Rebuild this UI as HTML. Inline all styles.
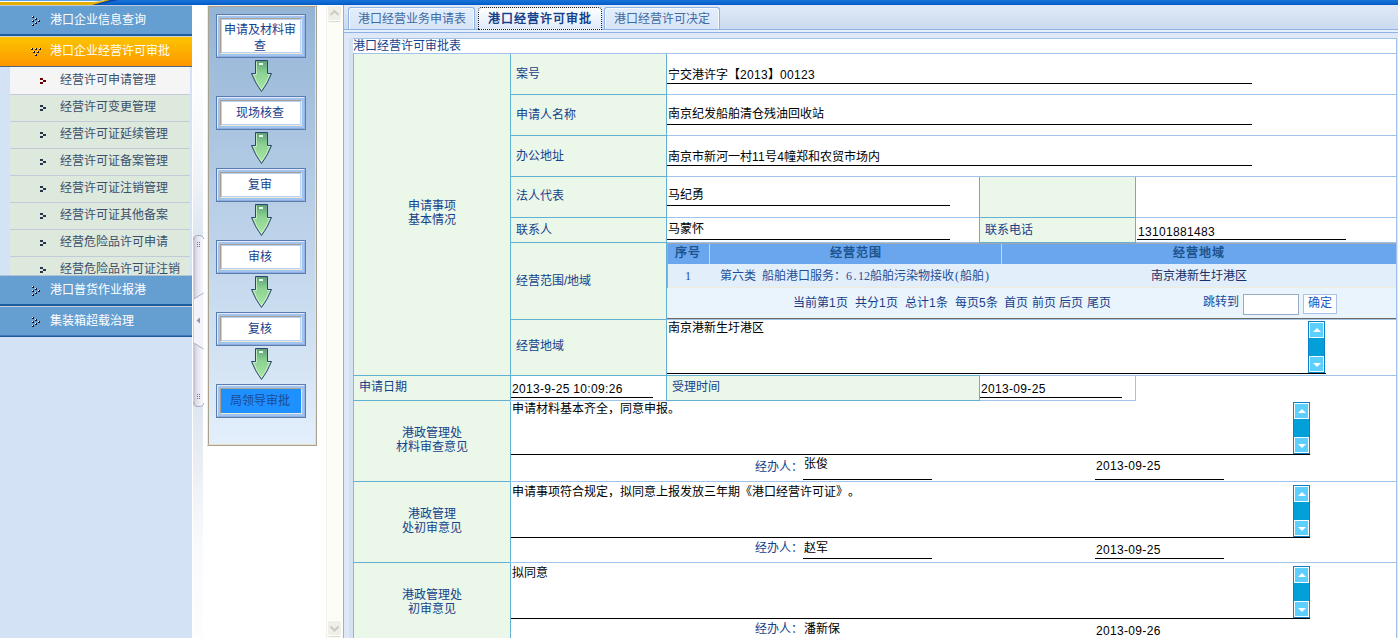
<!DOCTYPE html>
<html lang="zh-CN"><head><meta charset="utf-8"><title>港口经营许可审批</title><style>
*{box-sizing:border-box;margin:0;padding:0}
html,body{width:1398px;height:638px;overflow:hidden;background:#fff}
body{position:relative;font-family:"Liberation Sans",sans-serif;font-size:12px;line-height:14px;color:#000}
.a{position:absolute}
.t{position:absolute;white-space:nowrap;height:14px;line-height:14px;font-size:12px}
.w{color:#fff}
.bl{color:#15428b}
.g{position:absolute;background:#eaf7e9}
.lt{position:absolute;background:#62b0d2}
.lb{position:absolute;background:#a0c3ea}
.k{position:absolute;background:#000}
.c{text-align:center}
i{display:inline-block;width:12px;text-align:center;font-style:normal;letter-spacing:0}
.B{font-weight:bold}
.B i{width:13px;text-align:left}
.n{letter-spacing:.33px}
.h{display:inline-block;width:6px;text-align:center;font-family:"Liberation Serif",serif}
.hd{position:absolute;left:0;width:192px;height:30px;background:#659ed1}
.sub{position:absolute;left:10px;width:180px;height:27px;background:#dce9dc;border-bottom:1px solid #c3cbdb}
.sub .t{left:50px;top:5px;color:#3b4f6b}
.fb{position:absolute;left:216px;width:90px;height:34px;border:1px solid #5c7cae;background:#a2c3f0}
.fb u{position:absolute;left:0;top:0;right:0;bottom:0;border:1px solid #dfeafa;border-right-color:#94b6e6;border-bottom-color:#8cafdf}
.fb b{position:absolute;left:3px;top:3px;right:3px;bottom:3px;border:1px solid #a9a18d;border-right-color:#eee8d6;border-bottom-color:#eee8d6;box-shadow:inset 0 0 0 1px #b9d1f3;background:#fff;font-weight:normal;text-align:center;padding-right:3px;color:#17408a;font-size:12px;line-height:16px}
.sb{position:absolute;width:17px;background:#039fd9;border:1px solid #0b80c8}
.sb u{position:absolute;left:0;width:15px;height:16px;background:#5ccffd;border:1px solid #f4fcff;text-decoration:none}
.sb u:after{content:"";position:absolute;left:3px;border-left:4px solid transparent;border-right:4px solid transparent}
.sb u.up{top:0}
.sb u.up:after{top:5px;border-bottom:4px solid #fff}
.sb u.dn{bottom:0}
.sb u.dn:after{top:6px;border-top:4px solid #fff}
</style></head><body>
<div class="a" style="left:0;top:0;width:1398px;height:5px;background:linear-gradient(#1872d6,#0b67d1 60%,#0057c7)"></div>
<svg class="a" style="left:0;top:0" width="130" height="5" viewBox="0 0 130 5"><path d="M108 0H118L98 5H91Z" fill="#0a47a6"/><path d="M0 0H110L92 5H0Z" fill="#e2ae00"/><path d="M0 0H105C100 1.500 96 2.100 88 2.100H0Z" fill="#fff"/><path d="M0 0H104L100 .9H0Z" fill="#5aa0e2"/></svg>
<div class="a" style="left:0;top:5px;width:192px;height:633px;background:#d3e3f5"></div>
<div class="hd" style="top:5px"></div><div class="a" style="left:0;top:5px;width:192px;height:1px;background:#bfcad6"></div><div class="a" style="left:0;top:34px;width:192px;height:2px;background:#1f5c9c"></div><div class="a" style="left:0;top:36px;width:192px;height:1px;background:#c9d3df"></div>
<div class="a" style="left:32px;top:16px;width:2px;height:2px;background:#15153a"></div><div class="a" style="left:32px;top:16px;width:1px;height:1px;background:#fff"></div><div class="a" style="left:32px;top:20px;width:2px;height:2px;background:#15153a"></div><div class="a" style="left:32px;top:20px;width:1px;height:1px;background:#fff"></div><div class="a" style="left:32px;top:24px;width:2px;height:2px;background:#15153a"></div><div class="a" style="left:32px;top:24px;width:1px;height:1px;background:#fff"></div><div class="a" style="left:35px;top:18px;width:2px;height:2px;background:#15153a"></div><div class="a" style="left:35px;top:18px;width:1px;height:1px;background:#fff"></div><div class="a" style="left:35px;top:22px;width:2px;height:2px;background:#15153a"></div><div class="a" style="left:35px;top:22px;width:1px;height:1px;background:#fff"></div><div class="a" style="left:38px;top:20px;width:2px;height:2px;background:#15153a"></div><div class="a" style="left:38px;top:20px;width:1px;height:1px;background:#fff"></div>
<div class="t w" style="left:50px;top:13px;"><i>港</i><i>口</i><i>企</i><i>业</i><i>信</i><i>息</i><i>查</i><i>询</i></div>
<div class="a" style="left:0;top:37px;width:192px;height:29px;background:linear-gradient(#fbc400,#fdb000 45%,#ff9600)"></div><div class="a" style="left:0;top:66px;width:192px;height:1px;background:#4a6785"></div>
<div class="a" style="left:31px;top:48px;width:2px;height:2px;background:#15153a"></div><div class="a" style="left:31px;top:48px;width:1px;height:1px;background:#fff"></div><div class="a" style="left:35px;top:48px;width:2px;height:2px;background:#15153a"></div><div class="a" style="left:35px;top:48px;width:1px;height:1px;background:#fff"></div><div class="a" style="left:39px;top:48px;width:2px;height:2px;background:#15153a"></div><div class="a" style="left:39px;top:48px;width:1px;height:1px;background:#fff"></div><div class="a" style="left:33px;top:51px;width:2px;height:2px;background:#15153a"></div><div class="a" style="left:33px;top:51px;width:1px;height:1px;background:#fff"></div><div class="a" style="left:37px;top:51px;width:2px;height:2px;background:#15153a"></div><div class="a" style="left:37px;top:51px;width:1px;height:1px;background:#fff"></div><div class="a" style="left:35px;top:54px;width:2px;height:2px;background:#15153a"></div><div class="a" style="left:35px;top:54px;width:1px;height:1px;background:#fff"></div>
<div class="t w" style="left:50px;top:44px;"><i>港</i><i>口</i><i>企</i><i>业</i><i>经</i><i>营</i><i>许</i><i>可</i><i>审</i><i>批</i></div>
<div class="a" style="left:10px;top:67px;width:180px;height:1px;background:#f5f5f5"></div>
<div class="sub" style="top:68px;background:#f5f5f5"><div class="t"><i>经</i><i>营</i><i>许</i><i>可</i><i>申</i><i>请</i><i>管</i><i>理</i></div><div class="a" style="left:30px;top:10px;width:3px;height:2px;background:#6e0000"></div><div class="a" style="left:33px;top:12px;width:3px;height:2px;background:#6e0000"></div><div class="a" style="left:30px;top:14px;width:3px;height:2px;background:#6e0000"></div></div>
<div class="sub" style="top:95px;background:#dce9dc"><div class="t"><i>经</i><i>营</i><i>许</i><i>可</i><i>变</i><i>更</i><i>管</i><i>理</i></div><div class="a" style="left:30px;top:10px;width:3px;height:2px;background:#28344e"></div><div class="a" style="left:33px;top:12px;width:3px;height:2px;background:#28344e"></div><div class="a" style="left:30px;top:14px;width:3px;height:2px;background:#28344e"></div></div>
<div class="sub" style="top:122px;background:#dce9dc"><div class="t"><i>经</i><i>营</i><i>许</i><i>可</i><i>证</i><i>延</i><i>续</i><i>管</i><i>理</i></div><div class="a" style="left:30px;top:10px;width:3px;height:2px;background:#28344e"></div><div class="a" style="left:33px;top:12px;width:3px;height:2px;background:#28344e"></div><div class="a" style="left:30px;top:14px;width:3px;height:2px;background:#28344e"></div></div>
<div class="sub" style="top:149px;background:#dce9dc"><div class="t"><i>经</i><i>营</i><i>许</i><i>可</i><i>证</i><i>备</i><i>案</i><i>管</i><i>理</i></div><div class="a" style="left:30px;top:10px;width:3px;height:2px;background:#28344e"></div><div class="a" style="left:33px;top:12px;width:3px;height:2px;background:#28344e"></div><div class="a" style="left:30px;top:14px;width:3px;height:2px;background:#28344e"></div></div>
<div class="sub" style="top:176px;background:#dce9dc"><div class="t"><i>经</i><i>营</i><i>许</i><i>可</i><i>证</i><i>注</i><i>销</i><i>管</i><i>理</i></div><div class="a" style="left:30px;top:10px;width:3px;height:2px;background:#28344e"></div><div class="a" style="left:33px;top:12px;width:3px;height:2px;background:#28344e"></div><div class="a" style="left:30px;top:14px;width:3px;height:2px;background:#28344e"></div></div>
<div class="sub" style="top:203px;background:#dce9dc"><div class="t"><i>经</i><i>营</i><i>许</i><i>可</i><i>证</i><i>其</i><i>他</i><i>备</i><i>案</i></div><div class="a" style="left:30px;top:10px;width:3px;height:2px;background:#28344e"></div><div class="a" style="left:33px;top:12px;width:3px;height:2px;background:#28344e"></div><div class="a" style="left:30px;top:14px;width:3px;height:2px;background:#28344e"></div></div>
<div class="sub" style="top:230px;background:#dce9dc"><div class="t"><i>经</i><i>营</i><i>危</i><i>险</i><i>品</i><i>许</i><i>可</i><i>申</i><i>请</i></div><div class="a" style="left:30px;top:10px;width:3px;height:2px;background:#28344e"></div><div class="a" style="left:33px;top:12px;width:3px;height:2px;background:#28344e"></div><div class="a" style="left:30px;top:14px;width:3px;height:2px;background:#28344e"></div></div>
<div class="sub" style="top:257px;background:#dce9dc"><div class="t"><i>经</i><i>营</i><i>危</i><i>险</i><i>品</i><i>许</i><i>可</i><i>证</i><i>注</i><i>销</i></div><div class="a" style="left:30px;top:10px;width:3px;height:2px;background:#28344e"></div><div class="a" style="left:33px;top:12px;width:3px;height:2px;background:#28344e"></div><div class="a" style="left:30px;top:14px;width:3px;height:2px;background:#28344e"></div></div>
<div class="hd" style="top:275px;height:29px"></div><div class="a" style="left:0;top:275px;width:192px;height:1px;background:#b4c3d4"></div><div class="a" style="left:0;top:304px;width:192px;height:2px;background:#1f5c9c"></div><div class="a" style="left:0;top:306px;width:192px;height:1px;background:#c2cedb"></div>
<div class="a" style="left:32px;top:286px;width:2px;height:2px;background:#15153a"></div><div class="a" style="left:32px;top:286px;width:1px;height:1px;background:#fff"></div><div class="a" style="left:32px;top:290px;width:2px;height:2px;background:#15153a"></div><div class="a" style="left:32px;top:290px;width:1px;height:1px;background:#fff"></div><div class="a" style="left:32px;top:294px;width:2px;height:2px;background:#15153a"></div><div class="a" style="left:32px;top:294px;width:1px;height:1px;background:#fff"></div><div class="a" style="left:35px;top:288px;width:2px;height:2px;background:#15153a"></div><div class="a" style="left:35px;top:288px;width:1px;height:1px;background:#fff"></div><div class="a" style="left:35px;top:292px;width:2px;height:2px;background:#15153a"></div><div class="a" style="left:35px;top:292px;width:1px;height:1px;background:#fff"></div><div class="a" style="left:38px;top:290px;width:2px;height:2px;background:#15153a"></div><div class="a" style="left:38px;top:290px;width:1px;height:1px;background:#fff"></div>
<div class="t w" style="left:50px;top:283px;"><i>港</i><i>口</i><i>普</i><i>货</i><i>作</i><i>业</i><i>报</i><i>港</i></div>
<div class="hd" style="top:307px;height:29px"></div><div class="a" style="left:0;top:336px;width:192px;height:1px;background:#1f5c9c"></div><div class="a" style="left:0;top:335px;width:192px;height:1px;background:#3f7ab6"></div>
<div class="a" style="left:32px;top:317px;width:2px;height:2px;background:#15153a"></div><div class="a" style="left:32px;top:317px;width:1px;height:1px;background:#fff"></div><div class="a" style="left:32px;top:321px;width:2px;height:2px;background:#15153a"></div><div class="a" style="left:32px;top:321px;width:1px;height:1px;background:#fff"></div><div class="a" style="left:32px;top:325px;width:2px;height:2px;background:#15153a"></div><div class="a" style="left:32px;top:325px;width:1px;height:1px;background:#fff"></div><div class="a" style="left:35px;top:319px;width:2px;height:2px;background:#15153a"></div><div class="a" style="left:35px;top:319px;width:1px;height:1px;background:#fff"></div><div class="a" style="left:35px;top:323px;width:2px;height:2px;background:#15153a"></div><div class="a" style="left:35px;top:323px;width:1px;height:1px;background:#fff"></div><div class="a" style="left:38px;top:321px;width:2px;height:2px;background:#15153a"></div><div class="a" style="left:38px;top:321px;width:1px;height:1px;background:#fff"></div>
<div class="t w" style="left:50px;top:314px;"><i>集</i><i>装</i><i>箱</i><i>超</i><i>载</i><i>治</i><i>理</i></div>
<div class="a" style="left:192px;top:5px;width:16px;height:633px;background:#fff"></div>
<div class="a" style="left:193px;top:5px;width:10px;height:633px;background:linear-gradient(#fff,#fbfcfd 90px,#eef2f7 180px,#dfe7f1 226px,#dfe7f1 410px,#e6ebf2 440px,#f9fafc 540px,#fdfdfe)"></div>
<svg class="a" style="left:193px;top:235px" width="11" height="172" viewBox="0 0 11 172"><defs><linearGradient id="sg" x1="0" y1="0" x2="1" y2="0"><stop offset="0" stop-color="#b4b4ce"/><stop offset=".25" stop-color="#dcdce8"/><stop offset="1" stop-color="#fbfbfd"/></linearGradient></defs><path d="M.5 5Q.5 .5 5 .5H6Q10.500 .5 10.500 5V167Q10.500 171.500 6 171.500H5Q.5 171.500 .5 167Z" fill="url(#sg)"/><path d="M.5 5Q.5 .5 5 .5H6Q10.500 .5 10.500 4" fill="none" stroke="#a9a9c4"/><path d="M.5 167Q.5 171.500 5 171.500H6Q10.500 171.500 10.500 168" fill="none" stroke="#a9a9c4"/><path d="M1 64L10 58V114L1 108Z" fill="#f3f3f9"/><path d="M1 64L10.500 58M1 108L10.500 114" fill="none" stroke="#a9a9c4"/><path d="M7 82.500V88.500L3.500 85.500Z" fill="#9494b4"/><g fill="#7474a2"><rect x="4" y="7" width="1" height="1"/><rect x="6" y="7" width="1" height="1"/><rect x="4" y="9" width="1" height="1"/><rect x="6" y="9" width="1" height="1"/><rect x="4" y="11" width="1" height="1"/><rect x="6" y="11" width="1" height="1"/><rect x="4" y="159" width="1" height="1"/><rect x="6" y="159" width="1" height="1"/><rect x="4" y="161" width="1" height="1"/><rect x="6" y="161" width="1" height="1"/><rect x="4" y="163" width="1" height="1"/><rect x="6" y="163" width="1" height="1"/></g></svg>
<div class="a" style="left:207px;top:5px;width:110px;height:441px;border:1px solid #f4ecd4;border-right-color:#a9a190;border-bottom-color:#a9a190"></div>
<div class="a" style="left:208px;top:6px;width:108px;height:439px;border:1px solid #aaa291;border-right-color:#e8e2cc;border-bottom-color:#e8e2cc;background:linear-gradient(#94b4d6,#e3effb)"></div>
<svg width="0" height="0" style="position:absolute"><defs><linearGradient id="ag" x1="0" y1="0" x2="0" y2="1"><stop offset="0" stop-color="#5b9f77"/><stop offset=".4" stop-color="#8dd293"/><stop offset="1" stop-color="#a9e7a5"/></linearGradient></defs></svg>
<div class="fb" style="top:14px;height:44px"><u></u><b style="padding-top:3px"><i>申</i><i>请</i><i>及</i><i>材</i><i>料</i><i>审</i><br><i>查</i></b></div>
<svg class="a" style="left:250px;top:60px" width="23" height="33" viewBox="0 0 23 33"><path d="M5.500 .5H17.500V13.500H21.500Q17.800 23.200 11.500 31.500Q5.200 23.200 1.500 13.500H5.500Z" fill="url(#ag)" stroke="#2b4570" stroke-width="1"/><path d="M6.500 1.500V14.500H3.500Q6.500 22 11.500 29.500Q16.500 22 19.500 14.500H17" fill="none" stroke="#d4f6cc" stroke-width="1" opacity=".75"/><rect x="9" y="3" width="4" height="2" fill="#f2fff0"/></svg>
<div class="fb" style="top:96px;height:34px"><u></u><b style="padding-top:4px"><i>现</i><i>场</i><i>核</i><i>查</i></b></div>
<svg class="a" style="left:250px;top:132px" width="23" height="33" viewBox="0 0 23 33"><path d="M5.500 .5H17.500V13.500H21.500Q17.800 23.200 11.500 31.500Q5.200 23.200 1.500 13.500H5.500Z" fill="url(#ag)" stroke="#2b4570" stroke-width="1"/><path d="M6.500 1.500V14.500H3.500Q6.500 22 11.500 29.500Q16.500 22 19.500 14.500H17" fill="none" stroke="#d4f6cc" stroke-width="1" opacity=".75"/><rect x="9" y="3" width="4" height="2" fill="#f2fff0"/></svg>
<div class="fb" style="top:168px;height:34px"><u></u><b style="padding-top:4px"><i>复</i><i>审</i></b></div>
<svg class="a" style="left:250px;top:204px" width="23" height="33" viewBox="0 0 23 33"><path d="M5.500 .5H17.500V13.500H21.500Q17.800 23.200 11.500 31.500Q5.200 23.200 1.500 13.500H5.500Z" fill="url(#ag)" stroke="#2b4570" stroke-width="1"/><path d="M6.500 1.500V14.500H3.500Q6.500 22 11.500 29.500Q16.500 22 19.500 14.500H17" fill="none" stroke="#d4f6cc" stroke-width="1" opacity=".75"/><rect x="9" y="3" width="4" height="2" fill="#f2fff0"/></svg>
<div class="fb" style="top:240px;height:34px"><u></u><b style="padding-top:4px"><i>审</i><i>核</i></b></div>
<svg class="a" style="left:250px;top:276px" width="23" height="33" viewBox="0 0 23 33"><path d="M5.500 .5H17.500V13.500H21.500Q17.800 23.200 11.500 31.500Q5.200 23.200 1.500 13.500H5.500Z" fill="url(#ag)" stroke="#2b4570" stroke-width="1"/><path d="M6.500 1.500V14.500H3.500Q6.500 22 11.500 29.500Q16.500 22 19.500 14.500H17" fill="none" stroke="#d4f6cc" stroke-width="1" opacity=".75"/><rect x="9" y="3" width="4" height="2" fill="#f2fff0"/></svg>
<div class="fb" style="top:312px;height:34px"><u></u><b style="padding-top:4px"><i>复</i><i>核</i></b></div>
<svg class="a" style="left:250px;top:348px" width="23" height="33" viewBox="0 0 23 33"><path d="M5.500 .5H17.500V13.500H21.500Q17.800 23.200 11.500 31.500Q5.200 23.200 1.500 13.500H5.500Z" fill="url(#ag)" stroke="#2b4570" stroke-width="1"/><path d="M6.500 1.500V14.500H3.500Q6.500 22 11.500 29.500Q16.500 22 19.500 14.500H17" fill="none" stroke="#d4f6cc" stroke-width="1" opacity=".75"/><rect x="9" y="3" width="4" height="2" fill="#f2fff0"/></svg>
<div class="fb" style="top:384px;height:34px"><u></u><b style="background:#1e90ff;color:#1b4c94;box-shadow:none;padding-top:4px"><i>局</i><i>领</i><i>导</i><i>审</i><i>批</i></b></div>
<div class="a" style="left:326px;top:5px;width:17px;height:633px;background:#fdfdf8;border-left:1px solid #f3f2ea"></div>
<div class="a" style="left:328px;top:6px;width:13px;height:14px;background:#efeee7;border-radius:2px;box-shadow:0 0 0 1px #fff,0 2px 1px 0 #d9d8c8"></div>
<svg class="a" style="left:328px;top:6px" width="13" height="14"><path d="M2.500 9L6.500 5L10.500 9" fill="none" stroke="#cbcbc3" stroke-width="2"/></svg>
<div class="a" style="left:328px;top:621px;width:13px;height:14px;background:#efeee7;border-radius:2px;box-shadow:0 0 0 1px #fff,0 2px 1px 0 #d9d8c8"></div>
<svg class="a" style="left:328px;top:621px" width="13" height="14"><path d="M2.500 5.500L6.500 9.500L10.500 5.500" fill="none" stroke="#cbcbc3" stroke-width="2"/></svg>
<div class="a" style="left:343px;top:5px;width:1055px;height:633px;background:#dfe8f6;border-left:1px solid #8db2e3"></div>
<div class="a" style="left:344px;top:5px;width:1054px;height:24px;background:linear-gradient(#e1e9f8,#cbdaef)"></div>
<div class="a" style="left:344px;top:30px;width:1054px;height:2px;background:#e6effc"></div>
<div class="a" style="left:343px;top:29px;width:1055px;height:1px;background:#8db2e3"></div>
<div class="a" style="left:343px;top:32px;width:1055px;height:1px;background:#8db2e3"></div>
<div class="a" style="left:349px;top:38px;width:4px;height:600px;background:#d3e1f3"></div>
<div class="a" style="left:348px;top:7px;width:127px;height:22px;border:1px solid #8db2e3;border-bottom:none;border-radius:3px 3px 0 0;box-shadow:inset 1px 1px 0 #f6f9fe,inset -1px 0 0 #f6f9fe;background:linear-gradient(#e4eefc,#d6e4f7)"></div>
<div class="t c " style="left:348px;width:127px;top:12px;color:#416aa3"><i>港</i><i>口</i><i>经</i><i>营</i><i>业</i><i>务</i><i>申</i><i>请</i><i>表</i></div>
<div class="a" style="left:478px;top:7px;width:124px;height:23px;border:1px dotted #222;border-radius:4px 4px 0 0;background:linear-gradient(#fff,#f2f7fe 40%,#dfe9f8)"></div>
<div class="t c B" style="left:478px;width:124px;top:12px;color:#15428b"><i>港</i><i>口</i><i>经</i><i>营</i><i>许</i><i>可</i><i>审</i><i>批</i></div>
<div class="a" style="left:604px;top:7px;width:116px;height:22px;border:1px solid #8db2e3;border-bottom:none;border-radius:3px 3px 0 0;box-shadow:inset 1px 1px 0 #f6f9fe,inset -1px 0 0 #f6f9fe;background:linear-gradient(#e4eefc,#d6e4f7)"></div>
<div class="t c " style="left:604px;width:116px;top:12px;color:#416aa3"><i>港</i><i>口</i><i>经</i><i>营</i><i>许</i><i>可</i><i>决</i><i>定</i></div>
<div class="a" style="left:353px;top:38px;width:1044px;height:600px;background:#fff"></div>
<div class="lb" style="left:353px;top:38px;width:1044px;height:1px;"></div>
<div class="lb" style="left:1396px;top:38px;width:1px;height:600px;"></div>
<div class="t bl" style="left:353px;top:39px;"><i>港</i><i>口</i><i>经</i><i>营</i><i>许</i><i>可</i><i>审</i><i>批</i><i>表</i></div>
<div class="g" style="left:354px;top:54px;width:156px;height:321px;"></div>
<div class="g" style="left:511px;top:54px;width:155px;height:321px;"></div>
<div class="g" style="left:980px;top:177px;width:155px;height:65px;"></div>
<div class="g" style="left:354px;top:376px;width:156px;height:24px;"></div>
<div class="g" style="left:667px;top:376px;width:312px;height:24px;"></div>
<div class="g" style="left:354px;top:401px;width:156px;height:237px;"></div>
<div class="a" style="left:353px;top:53px;width:1px;height:585px;background:#8fb5e5"></div>
<div class="lt" style="left:510px;top:53px;width:1px;height:585px;"></div>
<div class="lt" style="left:666px;top:53px;width:1px;height:347px;"></div>
<div class="lt" style="left:979px;top:176px;width:1px;height:67px;"></div>
<div class="lt" style="left:1135px;top:176px;width:1px;height:67px;"></div>
<div class="lt" style="left:979px;top:375px;width:1px;height:25px;"></div>
<div class="lb" style="left:1135px;top:375px;width:1px;height:26px;"></div>
<div class="lb" style="left:353px;top:53px;width:1044px;height:1px;"></div>
<div class="lb" style="left:666px;top:94px;width:731px;height:1px;"></div>
<div class="lt" style="left:510px;top:94px;width:157px;height:1px;"></div>
<div class="lb" style="left:666px;top:135px;width:731px;height:1px;"></div>
<div class="lt" style="left:510px;top:135px;width:157px;height:1px;"></div>
<div class="lb" style="left:666px;top:176px;width:731px;height:1px;"></div>
<div class="lt" style="left:510px;top:176px;width:157px;height:1px;"></div>
<div class="lb" style="left:666px;top:217px;width:731px;height:1px;"></div>
<div class="lt" style="left:510px;top:217px;width:157px;height:1px;"></div>
<div class="lb" style="left:666px;top:242px;width:731px;height:1px;"></div>
<div class="lt" style="left:510px;top:242px;width:157px;height:1px;"></div>
<div class="lb" style="left:666px;top:319px;width:731px;height:1px;"></div>
<div class="lt" style="left:510px;top:319px;width:157px;height:1px;"></div>
<div class="lb" style="left:666px;top:375px;width:731px;height:1px;"></div>
<div class="lt" style="left:510px;top:375px;width:157px;height:1px;"></div>
<div class="lt" style="left:353px;top:375px;width:158px;height:1px;"></div>
<div class="lt" style="left:979px;top:217px;width:157px;height:1px;"></div>
<div class="lt" style="left:979px;top:242px;width:157px;height:1px;"></div>
<div class="lt" style="left:666px;top:375px;width:314px;height:1px;"></div>
<div class="lt" style="left:353px;top:400px;width:158px;height:1px;"></div>
<div class="lb" style="left:510px;top:400px;width:626px;height:1px;"></div>
<div class="lt" style="left:666px;top:400px;width:314px;height:1px;"></div>
<div class="lt" style="left:353px;top:481px;width:158px;height:1px;"></div>
<div class="lb" style="left:510px;top:481px;width:887px;height:1px;"></div>
<div class="lt" style="left:353px;top:562px;width:158px;height:1px;"></div>
<div class="lb" style="left:510px;top:562px;width:887px;height:1px;"></div>
<div class="t c bl" style="left:354px;width:156px;top:199px;"><i>申</i><i>请</i><i>事</i><i>项</i></div>
<div class="t c bl" style="left:354px;width:156px;top:213px;"><i>基</i><i>本</i><i>情</i><i>况</i></div>
<div class="t bl" style="left:516px;top:67px;"><i>案</i><i>号</i></div>
<div class="t bl" style="left:516px;top:108px;"><i>申</i><i>请</i><i>人</i><i>名</i><i>称</i></div>
<div class="t bl" style="left:516px;top:149px;"><i>办</i><i>公</i><i>地</i><i>址</i></div>
<div class="t bl" style="left:516px;top:189px;"><i>法</i><i>人</i><i>代</i><i>表</i></div>
<div class="t bl" style="left:516px;top:223px;"><i>联</i><i>系</i><i>人</i></div>
<div class="t bl" style="left:516px;top:274px;"><i>经</i><i>营</i><i>范</i><i>围</i>/<i>地</i><i>域</i></div>
<div class="t bl" style="left:516px;top:339px;"><i>经</i><i>营</i><i>地</i><i>域</i></div>
<div class="t bl" style="left:985px;top:223px;"><i>联</i><i>系</i><i>电</i><i>话</i></div>
<div class="t bl" style="left:359px;top:380px;"><i>申</i><i>请</i><i>日</i><i>期</i></div>
<div class="t bl" style="left:672px;top:380px;"><i>受</i><i>理</i><i>时</i><i>间</i></div>
<div class="t " style="left:668px;top:68px;"><i>宁</i><i>交</i><i>港</i><i>许</i><i>字</i><i>【</i><span class="n">2013</span><i>】</i><span class="n">00123</span></div>
<div class="k" style="left:667px;top:83px;width:585px;height:1px;"></div>
<div class="t " style="left:668px;top:107px;"><i>南</i><i>京</i><i>纪</i><i>发</i><i>船</i><i>舶</i><i>清</i><i>仓</i><i>残</i><i>油</i><i>回</i><i>收</i><i>站</i></div>
<div class="k" style="left:667px;top:124px;width:585px;height:1px;"></div>
<div class="t " style="left:668px;top:150px;"><i>南</i><i>京</i><i>市</i><i>新</i><i>河</i><i>一</i><i>村</i><span class="n">11</span><i>号</i><span class="n">4</span><i>幢</i><i>郑</i><i>和</i><i>农</i><i>贸</i><i>市</i><i>场</i><i>内</i></div>
<div class="k" style="left:667px;top:165px;width:585px;height:1px;"></div>
<div class="t " style="left:668px;top:188px;"><i>马</i><i>纪</i><i>勇</i></div>
<div class="k" style="left:667px;top:205px;width:283px;height:1px;"></div>
<div class="t " style="left:668px;top:222px;"><i>马</i><i>蒙</i><i>怀</i></div>
<div class="k" style="left:667px;top:239px;width:283px;height:1px;"></div>
<div class="t " style="left:1138px;top:225px;"><span class="n">13101881483</span></div>
<div class="k" style="left:1137px;top:239px;width:209px;height:1px;"></div>
<div class="t " style="left:512px;top:382px;"><span class="n">2013-9-25 10:09:26</span></div>
<div class="k" style="left:511px;top:397px;width:142px;height:1px;"></div>
<div class="t " style="left:981px;top:382px;"><span class="n">2013-09-25</span></div>
<div class="k" style="left:980px;top:397px;width:142px;height:1px;"></div>
<div class="a" style="left:667px;top:243px;width:729px;height:1px;background:#a4a7ad"></div>
<div class="a" style="left:667px;top:243px;width:1px;height:45px;background:#a4a7ad"></div>
<div class="a" style="left:668px;top:244px;width:728px;height:20px;background:#6aa6ee"></div>
<div class="a" style="left:709px;top:244px;width:1px;height:20px;background:#c9d6e8"></div>
<div class="a" style="left:1001px;top:244px;width:1px;height:20px;background:#c9d6e8"></div>
<div class="a" style="left:668px;top:264px;width:728px;height:23px;background:#e3eefb"></div>
<div class="a" style="left:668px;top:287px;width:728px;height:1px;background:#f0ead8"></div>
<div class="a" style="left:709px;top:264px;width:1px;height:23px;background:#f0ead8"></div>
<div class="a" style="left:1001px;top:264px;width:1px;height:23px;background:#f0ead8"></div>
<div class="a" style="left:667px;top:288px;width:729px;height:30px;background:#e9f4fd"></div>
<div class="a" style="left:667px;top:318px;width:729px;height:1px;background:#6e675f"></div>
<div class="t c B" style="left:667px;width:42px;top:246px;color:#1c5590"><i>序</i><i>号</i></div>
<div class="t c B" style="left:710px;width:291px;top:246px;color:#1c5590"><i>经</i><i>营</i><i>范</i><i>围</i></div>
<div class="t c B" style="left:1002px;width:394px;top:246px;color:#1c5590"><i>经</i><i>营</i><i>地</i><i>域</i></div>
<div class="t c " style="left:667px;width:42px;top:269px;color:#1e4e96"><span class="h">1</span></div>
<div class="t " style="left:720px;top:269px;color:#1e4e96"><i>第</i><i>六</i><i>类</i><span class="h">&nbsp;</span><i>船</i><i>舶</i><i>港</i><i>口</i><i>服</i><i>务</i><i>：</i><span class="h">6</span><span class="h">.</span><span class="h">1</span><span class="h">2</span><i>船</i><i>舶</i><i>污</i><i>染</i><i>物</i><i>接</i><i>收</i><span class="h">(</span><i>船</i><i>舶</i><span class="h">)</span></div>
<div class="t c " style="left:1002px;width:394px;top:269px;color:#1a2f66"><i>南</i><i>京</i><i>港</i><i>新</i><i>生</i><i>圩</i><i>港</i><i>区</i></div>
<div class="t " style="left:793px;top:296px;color:#183d86"><i>当</i><i>前</i><i>第</i><span class="n">1</span><i>页</i></div>
<div class="t " style="left:855px;top:296px;color:#183d86"><i>共</i><i>分</i><span class="n">1</span><i>页</i></div>
<div class="t " style="left:905px;top:296px;color:#183d86"><i>总</i><i>计</i><span class="n">1</span><i>条</i></div>
<div class="t " style="left:955px;top:296px;color:#183d86"><i>每</i><i>页</i><span class="n">5</span><i>条</i></div>
<div class="t " style="left:1004px;top:296px;color:#183d86"><i>首</i><i>页</i></div>
<div class="t " style="left:1032px;top:296px;color:#183d86"><i>前</i><i>页</i></div>
<div class="t " style="left:1059px;top:296px;color:#183d86"><i>后</i><i>页</i></div>
<div class="t " style="left:1087px;top:296px;color:#183d86"><i>尾</i><i>页</i></div>
<div class="t " style="left:1203px;top:295px;color:#1a4a98"><i>跳</i><i>转</i><i>到</i></div>
<div class="a" style="left:1243px;top:294px;width:56px;height:21px;background:#fff;border:1px solid #9aabc4"></div>
<div class="a" style="left:1303px;top:294px;width:34px;height:20px;background:#fff;border:1px solid #a9c2ea"></div>
<div class="t " style="left:1308px;top:296px;color:#1858c8"><i>确</i><i>定</i></div>
<div class="t " style="left:668px;top:321px;"><i>南</i><i>京</i><i>港</i><i>新</i><i>生</i><i>圩</i><i>港</i><i>区</i></div>
<div class="k" style="left:667px;top:373px;width:659px;height:1px;"></div>
<div class="sb" style="left:1308px;top:321px;height:52px"><u class="up"></u><u class="dn"></u></div>
<div class="t c bl" style="left:354px;width:156px;top:426px;"><i>港</i><i>政</i><i>管</i><i>理</i><i>处</i></div>
<div class="t c bl" style="left:354px;width:156px;top:440px;"><i>材</i><i>料</i><i>审</i><i>查</i><i>意</i><i>见</i></div>
<div class="t " style="left:512px;top:402px;"><i>申</i><i>请</i><i>材</i><i>料</i><i>基</i><i>本</i><i>齐</i><i>全</i><i>，</i><i>同</i><i>意</i><i>申</i><i>报</i><i>。</i></div>
<div class="k" style="left:511px;top:454px;width:799px;height:1px;"></div>
<div class="sb" style="left:1293px;top:402px;height:52px"><u class="up"></u><u class="dn"></u></div>
<div class="t bl" style="left:755px;top:460px;"><i>经</i><i>办</i><i>人</i><i>：</i></div>
<div class="t " style="left:804px;top:457px;"><i>张</i><i>俊</i></div>
<div class="k" style="left:803px;top:479px;width:129px;height:1px;"></div>
<div class="t " style="left:1096px;top:459px;"><span class="n">2013-09-25</span></div>
<div class="k" style="left:1095px;top:479px;width:129px;height:1px;"></div>
<div class="t c bl" style="left:354px;width:156px;top:507px;"><i>港</i><i>政</i><i>管</i><i>理</i></div>
<div class="t c bl" style="left:354px;width:156px;top:521px;"><i>处</i><i>初</i><i>审</i><i>意</i><i>见</i></div>
<div class="t " style="left:512px;top:485px;"><i>申</i><i>请</i><i>事</i><i>项</i><i>符</i><i>合</i><i>规</i><i>定</i><i>，</i><i>拟</i><i>同</i><i>意</i><i>上</i><i>报</i><i>发</i><i>放</i><i>三</i><i>年</i><i>期</i><i>《</i><i>港</i><i>口</i><i>经</i><i>营</i><i>许</i><i>可</i><i>证</i><i>》</i><i>。</i></div>
<div class="k" style="left:511px;top:537px;width:799px;height:1px;"></div>
<div class="sb" style="left:1293px;top:485px;height:52px"><u class="up"></u><u class="dn"></u></div>
<div class="t bl" style="left:755px;top:541px;"><i>经</i><i>办</i><i>人</i><i>：</i></div>
<div class="t " style="left:804px;top:541px;"><i>赵</i><i>军</i></div>
<div class="k" style="left:803px;top:558px;width:129px;height:1px;"></div>
<div class="t " style="left:1096px;top:543px;"><span class="n">2013-09-25</span></div>
<div class="k" style="left:1095px;top:558px;width:129px;height:1px;"></div>
<div class="t c bl" style="left:354px;width:156px;top:588px;"><i>港</i><i>政</i><i>管</i><i>理</i><i>处</i></div>
<div class="t c bl" style="left:354px;width:156px;top:602px;"><i>初</i><i>审</i><i>意</i><i>见</i></div>
<div class="t " style="left:512px;top:566px;"><i>拟</i><i>同</i><i>意</i></div>
<div class="k" style="left:511px;top:618px;width:799px;height:1px;"></div>
<div class="sb" style="left:1293px;top:566px;height:52px"><u class="up"></u><u class="dn"></u></div>
<div class="t bl" style="left:755px;top:622px;"><i>经</i><i>办</i><i>人</i><i>：</i></div>
<div class="t " style="left:804px;top:622px;"><i>潘</i><i>新</i><i>保</i></div>
<div class="k" style="left:803px;top:639px;width:129px;height:1px;"></div>
<div class="t " style="left:1096px;top:624px;"><span class="n">2013-09-26</span></div>
<div class="k" style="left:1095px;top:639px;width:129px;height:1px;"></div>
</body></html>
